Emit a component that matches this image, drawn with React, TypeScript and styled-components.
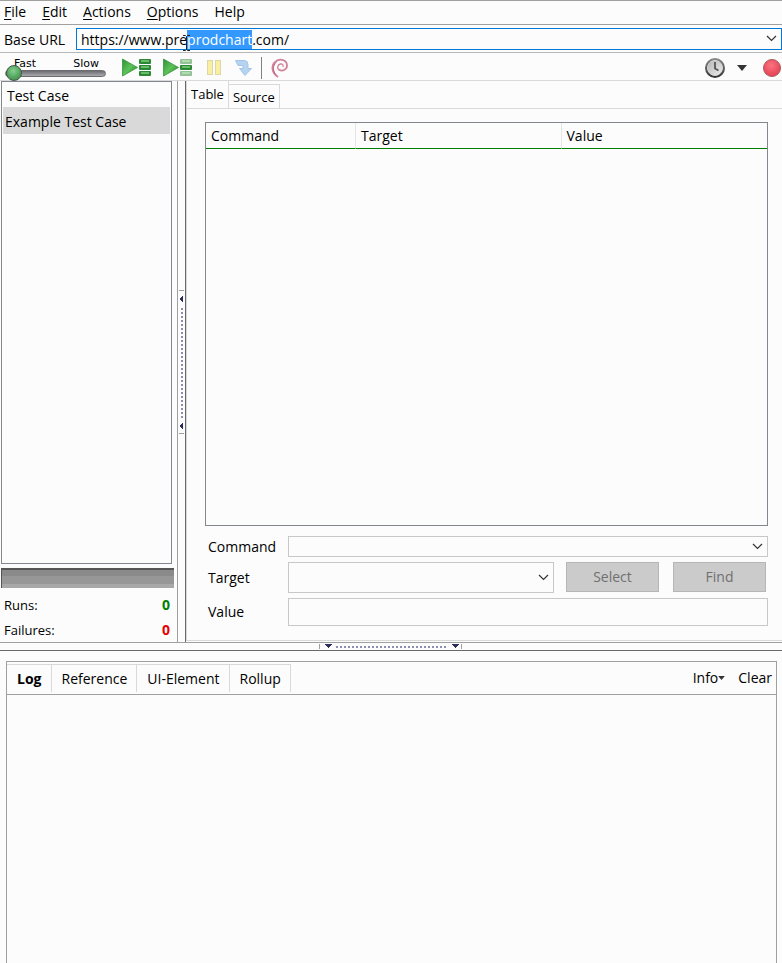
import React, { useEffect, useRef } from "react";
import styled, { createGlobalStyle } from "styled-components";

const ink = "#000";
const paper = "#fcfcfc";
const line = "#a0a0a0";
const soft = "#d9d9d9";
const boxLine = "#828790";

const GlobalStyle = createGlobalStyle`
  *, *::before, *::after { box-sizing: border-box; }
  body { margin: 0; background: ${paper}; color: ${ink}; font: 14px/20px "Open Sans", "Noto Sans", sans-serif; }
  button, input, select { font: inherit; color: inherit; margin: 0; border-radius: 0; }
  button { border: 0; padding: 0; background: none; white-space: nowrap; }
`;

const Window = styled.div`
  display: flex;
  flex-direction: column;
  height: 100vh;
  overflow: hidden;
`;

const MenuBar = styled.nav`
  display: flex;
  align-items: center;
  gap: 16px;
  height: 25px;
  padding: 0 4px 2px;
  border-top: 1px solid ${line};
  border-bottom: 1px solid ${line};
  flex: none;
`;

const Mnemonic = styled.span`
  text-decoration: underline;
  text-underline-offset: 2px;
`;

const UrlBar = styled.div`
  display: flex;
  align-items: center;
  height: 28px;
  padding-left: 4px;
  border-bottom: 1px solid #b8b8b8;
  flex: none;
`;

const UrlLabel = styled.label`
  width: 72px;
  padding-top: 2px;
`;

const UrlCombo = styled.div`
  position: relative;
  display: flex;
  flex: 1;
  height: 22px;
  border: 1px solid #0078d7;
`;

const UrlInput = styled.input`
  flex: 1;
  min-width: 0;
  border: 0;
  outline: 0;
  padding: 2px 4px 0;
  background: transparent;
  &::selection { background: #3399ff; color: #fff; }
`;

const DropButton = styled.button`
  width: 20px;
  display: grid;
  place-items: center;
`;

const Pointer = styled.svg`
  position: absolute;
  left: 105px;
  top: 6px;
`;

const Toolbar = styled.div`
  display: flex;
  align-items: center;
  height: 28px;
  padding-top: 2px;
  border-bottom: 1px solid ${soft};
  flex: none;
`;

const Speed = styled.div`
  display: flex;
  flex-direction: column;
  width: 101px;
  height: 26px;
  margin: 0 16px 0 5px;
  font: 11px/12px "DejaVu Sans", sans-serif;
`;

const SpeedNames = styled.label`
  display: flex;
  justify-content: space-between;
  padding: 3px 7px 0 9px;
  height: 12px;
`;

const SpeedSlider = styled.input`
  appearance: none;
  width: 100%;
  height: 14px;
  background: transparent;
  &::-webkit-slider-runnable-track {
    height: 7px;
    border: 1px solid #6b6b6b;
    border-radius: 4px;
    background: linear-gradient(#6c6c72, #a9a9ae);
  }
  &::-webkit-slider-thumb {
    appearance: none;
    width: 16px;
    height: 16px;
    margin-top: -6px;
    border: 1px solid #47564a;
    border-radius: 50%;
    background: radial-gradient(circle at 45% 35%, #86cf91, #53a55f 55%, #3b7f47);
  }
`;

const ToolButton = styled.button<{ $w: number; $after?: number }>`
  width: ${(p) => p.$w}px;
  height: 24px;
  margin-right: ${(p) => p.$after ?? 0}px;
  display: grid;
  place-items: center;
  flex: none;
  svg { display: block; }
`;

const ToolDivider = styled.div`
  width: 1px;
  height: 22px;
  background: #808080;
  margin-right: 9px;
`;

const Spacer = styled.div`
  flex: 1;
`;

const Workspace = styled.main`
  display: flex;
  flex: 561 1 0;
  min-height: 0;
`;

const Sidebar = styled.aside`
  display: flex;
  flex-direction: column;
  width: 177px;
  padding-left: 1px;
  flex: none;
`;

const TreeBox = styled.div`
  flex: 1;
  margin-right: 5px;
  border: 1px solid ${boxLine};
  padding: 0 1px;
`;

const Tree = styled.table`
  width: 100%;
  border-collapse: collapse;
  th { height: 25px; padding: 2px 4px 0; text-align: left; font-weight: 400; }
  td { height: 27px; padding: 2px 2px 0; background: ${soft}; }
`;

const RunProgress = styled.div`
  height: 20px;
  margin: 4px 3px 4px 0;
  border: 1px solid #555;
  border-width: 2px 0 0 1px;
  background: linear-gradient(#8a8a8a 0 6px, #979797 6px 14px, #a8a8a8 14px);
`;

const Totals = styled.dl`
  margin: 0;
  padding: 0 7px 0 3px;
  font-size: 13px;
`;

const Total = styled.div<{ $color: string }>`
  display: flex;
  justify-content: space-between;
  align-items: center;
  height: 25px;
  dd { margin: 0; font-size: 14px; font-weight: 700; color: ${(p) => p.$color}; }
`;

const ColumnSplitter = styled.div`
  display: flex;
  align-items: center;
  justify-content: center;
  width: 9px;
  border-left: 1px solid ${line};
  border-right: 1px solid #696969;
  flex: none;
`;

const RowSplitter = styled.div`
  display: flex;
  align-items: center;
  justify-content: center;
  height: 9px;
  border-top: 1px solid ${line};
  border-bottom: 1px solid #696969;
  flex: none;
`;

const Editor = styled.section`
  display: flex;
  flex-direction: column;
  flex: 1;
  min-width: 0;
  margin-bottom: 1px;
  border-left: 1px solid ${soft};
  border-bottom: 1px solid ${soft};
`;

const EditorTabs = styled.div`
  display: flex;
  align-items: flex-end;
  height: 28px;
  border-bottom: 1px solid ${soft};
  font-size: 13px;
  flex: none;
`;

const EditorTab = styled.button<{ $active?: boolean }>`
  height: ${(p) => (p.$active ? 27 : 24)}px;
  padding: ${(p) => (p.$active ? "0 4px 2px" : "0 4px")};
  border-right: 1px solid ${soft};
  border-top: ${(p) => (p.$active ? 0 : 1)}px solid ${soft};
`;

const EditorBody = styled.div`
  display: flex;
  flex-direction: column;
  flex: 1;
  padding: 13px 14px 14px 18px;
`;

const CommandBox = styled.div`
  flex: 1;
  border: 1px solid ${boxLine};
`;

const CommandTable = styled.table`
  width: 100%;
  table-layout: fixed;
  border-collapse: separate;
  border-spacing: 0;
  th {
    height: 26px;
    padding: 0 5px;
    font-weight: 400;
    text-align: left;
    border-bottom: 1px solid #008000;
    border-right: 1px solid #e5e5e5;
  }
  th:first-child { width: 150px; }
  th:last-child { border-right: 0; }
`;

const Form = styled.form`
  display: grid;
  grid-template-columns: 80px 1fr;
  grid-template-rows: 21px 31px 28px;
  row-gap: 5px;
  align-items: center;
  padding: 10px 0 0 3px;
`;

const FieldLine = styled.div`
  display: flex;
  align-items: flex-start;
  height: 100%;
  min-width: 0;
`;

const Combo = styled.div`
  position: relative;
  flex: 1;
  height: 100%;
`;

const Select = styled.select`
  appearance: none;
  display: block;
  width: 100%;
  height: 100%;
  border: 1px solid #c8c8c8;
  background: transparent;
`;

const ComboArrow = styled.span`
  position: absolute;
  inset: 0 5px 0 auto;
  display: grid;
  place-items: center;
  pointer-events: none;
`;

const TextBox = styled.input`
  width: 100%;
  height: 100%;
  border: 1px solid #c8c8c8;
  background: transparent;
`;

const PushButton = styled.button<{ $before: number }>`
  width: 93px;
  height: 30px;
  margin-left: ${(p) => p.$before}px;
  border: 1px solid #b6b6b6;
  background: #cbcbcb;
  color: #707070;
  &:last-child { margin-right: 2px; }
`;

const LogArea = styled.section`
  display: flex;
  flex: 312 1 0;
  min-height: 0;
`;

const LogPanel = styled.div`
  flex: 1;
  margin: 10px 5px 0 6px;
  border: 1px solid ${line};
  border-bottom: 0;
`;

const LogHeader = styled.div`
  display: flex;
  align-items: center;
  height: 33px;
  padding-right: 4px;
  border-bottom: 1px solid ${line};
`;

const LogTab = styled.button<{ $active?: boolean }>`
  height: 28px;
  padding: 0 9px 0 10px;
  border-top: 1px solid ${soft};
  border-right: 1px solid ${soft};
  font-weight: ${(p) => (p.$active ? 700 : 400)};
`;

const LogAction = styled.button`
  display: flex;
  align-items: center;
  margin-left: 13px;
`;

function Chevron() {
  return (
    <svg width="11" height="7" viewBox="0 0 11 7" fill="none" stroke="#333">
      <path d="M1 1l4.500 4.500L10 1" strokeWidth="1.200" />
    </svg>
  );
}

function PlayIcon({ single }: { single?: boolean }) {
  const ys = [1, 7, 13];
  return (
    <svg width="30" height="19" viewBox="0 0 30 19">
      <defs>
        <linearGradient id="play" x1="0" y1="0" x2="1" y2="1">
          <stop offset="0" stopColor="#2f8f35" />
          <stop offset=".5" stopColor="#5cc257" />
          <stop offset="1" stopColor="#1f7f2a" />
        </linearGradient>
      </defs>
      <path d="M.5 1v17l15-8.500z" fill="url(#play)" stroke="#359540" strokeWidth=".8" />
      {ys.map((y, i) => (
        <g key={y} opacity={single && i !== 1 ? 0.5 : 1}>
          <rect x="17" y={y} width="12" height="5" rx="1" fill="#2c8836" />
          <rect x="19" y={y + 1} width="8" height="2" fill="#69bd67" />
        </g>
      ))}
    </svg>
  );
}

function PauseIcon() {
  return (
    <svg width="16" height="17" viewBox="0 0 16 17" fill="#f8efa0" stroke="#ddd6a6">
      <rect x="1.500" y="1.500" width="5" height="14" />
      <rect x="9.500" y="1.500" width="5" height="14" />
    </svg>
  );
}

function StepIcon() {
  return (
    <svg width="18" height="18" viewBox="0 0 18 18">
      <path d="M.5 1.500H9q4 0 4 4v4h3.500L10 16.500 4.500 9.500H8V6.500H3z" fill="#b5d4f1" stroke="#a3c3e4" strokeLinejoin="round" />
    </svg>
  );
}

function SwirlIcon() {
  return (
    <svg width="18" height="20" viewBox="0 0 18 20" fill="none" stroke="#d3809b" strokeLinecap="round">
      <path d="M6.500 18.500C1 15 0 8 3.500 4.500 7.500 0 15.500 1 16 7c.3 4.500-4.500 6.500-7.500 5" strokeWidth="1.800" />
      <path d="M8.500 12C5.500 10.500 6.500 6.500 9.500 6c2-.3 3 1 2.500 2.500" strokeWidth="1.300" />
      <path d="M5 17C1.500 13 1.500 7.500 5 4.500" strokeWidth="1" stroke="#c05f7f" />
    </svg>
  );
}

function ClockIcon() {
  return (
    <svg width="22" height="22" viewBox="0 0 22 22">
      <defs>
        <linearGradient id="clock" x1="0" y1="0" x2="0" y2="1">
          <stop offset="0" stopColor="#8c8c8c" />
          <stop offset="1" stopColor="#303030" />
        </linearGradient>
        <linearGradient id="face" x1="0" y1="0" x2="1" y2="1">
          <stop offset="0" stopColor="#b4b4b4" />
          <stop offset="1" stopColor="#ededed" />
        </linearGradient>
      </defs>
      <circle cx="11" cy="11" r="10" fill="url(#clock)" />
      <circle cx="11" cy="11" r="7.500" fill="url(#face)" stroke="#d8d8d8" />
      <path d="M11 5v6.500l3.500 2" fill="none" stroke="#555" strokeWidth="1.800" />
    </svg>
  );
}

function DownTriangle({ small }: { small?: boolean }) {
  return (
    <svg width={small ? 7 : 10} height={small ? 4 : 6} viewBox="0 0 10 6">
      <path d="M0 0h10L5 6z" fill="#333" />
    </svg>
  );
}

function RecordIcon() {
  return (
    <svg width="20" height="20" viewBox="0 0 20 20">
      <defs>
        <radialGradient id="rec" cx=".45" cy=".35" r=".7">
          <stop offset="0" stopColor="#fa7480" />
          <stop offset="1" stopColor="#e33c50" />
        </radialGradient>
      </defs>
      <circle cx="10" cy="10" r="8.500" fill="url(#rec)" stroke="#a95a61" />
    </svg>
  );
}

function GripVertical() {
  return (
    <svg width="7" height="144" viewBox="0 0 7 144" shapeRendering="crispEdges">
      <path d="M1 .5h5M1 143.500h5" stroke={line} />
      <path d="M5 5v8L1 9zM5 132v8l-4-4z" fill="#2b2b5c" />
      <path d="M4 18v111" stroke="#8d8daf" strokeWidth="2" strokeDasharray="2 2" />
    </svg>
  );
}

function GripHorizontal() {
  return (
    <svg width="144" height="7" viewBox="0 0 144 7" shapeRendering="crispEdges">
      <path d="M.5 1v5M142.500 1v5" stroke={line} />
      <path d="M5 1h8L9 5zM132 1h8l-4 4z" fill="#2b2b5c" />
      <path d="M17 4h112" stroke="#8d8daf" strokeWidth="2" strokeDasharray="2 2" />
    </svg>
  );
}

export default function App() {
  const url = useRef<HTMLInputElement>(null);

  useEffect(() => {
    url.current?.focus();
    url.current?.setSelectionRange(15, 24);
  }, []);

  return (
    <Window>
      <GlobalStyle />
      <MenuBar>
        {["File", "Edit", "Actions", "Options"].map((name) => (
          <button key={name}>
            <Mnemonic>{name[0]}</Mnemonic>
            {name.slice(1)}
          </button>
        ))}
        <button>Help</button>
      </MenuBar>

      <UrlBar>
        <UrlLabel htmlFor="base-url">Base URL</UrlLabel>
        <UrlCombo>
          <UrlInput id="base-url" ref={url} spellCheck={false} defaultValue="https://www.preprodchart.com/" />
          <DropButton aria-label="Recent URLs">
            <Chevron />
          </DropButton>
          <Pointer width="9" height="16" viewBox="0 0 9 16" stroke="#222" fill="none">
            <path d="M1 .5h2.500l1 1 1-1H8M4.500 1.500v13M1 15.500h2.500l1-1 1 1H8" />
          </Pointer>
        </UrlCombo>
      </UrlBar>

      <Toolbar>
        <Speed>
          <SpeedNames htmlFor="speed">
            <span>Fast</span>
            <span>Slow</span>
          </SpeedNames>
          <SpeedSlider id="speed" type="range" min="0" max="10" defaultValue="0" />
        </Speed>
        <ToolButton $w={30} $after={11} aria-label="Play test suite"><PlayIcon /></ToolButton>
        <ToolButton $w={30} $after={13} aria-label="Play test case"><PlayIcon single /></ToolButton>
        <ToolButton $w={16} $after={13} aria-label="Pause"><PauseIcon /></ToolButton>
        <ToolButton $w={18} $after={8} aria-label="Step"><StepIcon /></ToolButton>
        <ToolDivider />
        <ToolButton $w={18} aria-label="Rollup rules"><SwirlIcon /></ToolButton>
        <Spacer />
        <ToolButton $w={22} $after={11} aria-label="Schedule"><ClockIcon /></ToolButton>
        <ToolButton $w={10} $after={15} aria-label="Schedule options"><DownTriangle /></ToolButton>
        <ToolButton $w={20} aria-label="Record"><RecordIcon /></ToolButton>
      </Toolbar>

      <Workspace>
        <Sidebar>
          <TreeBox>
            <Tree>
              <thead><tr><th>Test Case</th></tr></thead>
              <tbody><tr><td>Example Test Case</td></tr></tbody>
            </Tree>
          </TreeBox>
          <RunProgress role="progressbar" aria-label="Run progress" />
          <Totals>
            <Total $color="#008000"><dt>Runs:</dt><dd>0</dd></Total>
            <Total $color="#e60000"><dt>Failures:</dt><dd>0</dd></Total>
          </Totals>
        </Sidebar>

        <ColumnSplitter><GripVertical /></ColumnSplitter>

        <Editor>
          <EditorTabs role="tablist">
            <EditorTab role="tab" $active>Table</EditorTab>
            <EditorTab role="tab">Source</EditorTab>
          </EditorTabs>
          <EditorBody>
            <CommandBox>
              <CommandTable>
                <thead>
                  <tr><th>Command</th><th>Target</th><th>Value</th></tr>
                </thead>
              </CommandTable>
            </CommandBox>
            <Form>
              <label htmlFor="command">Command</label>
              <Combo>
                <Select id="command" />
                <ComboArrow><Chevron /></ComboArrow>
              </Combo>
              <label htmlFor="target">Target</label>
              <FieldLine>
                <Combo>
                  <Select id="target" />
                  <ComboArrow><Chevron /></ComboArrow>
                </Combo>
                <PushButton type="button" disabled $before={12}>Select</PushButton>
                <PushButton type="button" disabled $before={14}>Find</PushButton>
              </FieldLine>
              <label htmlFor="value">Value</label>
              <TextBox id="value" type="text" />
            </Form>
          </EditorBody>
        </Editor>
      </Workspace>

      <RowSplitter><GripHorizontal /></RowSplitter>

      <LogArea>
        <LogPanel>
          <LogHeader>
            <LogTab $active>Log</LogTab>
            <LogTab>Reference</LogTab>
            <LogTab>UI-Element</LogTab>
            <LogTab>Rollup</LogTab>
            <Spacer />
            <LogAction>Info<DownTriangle small /></LogAction>
            <LogAction>Clear</LogAction>
          </LogHeader>
        </LogPanel>
      </LogArea>
    </Window>
  );
}
